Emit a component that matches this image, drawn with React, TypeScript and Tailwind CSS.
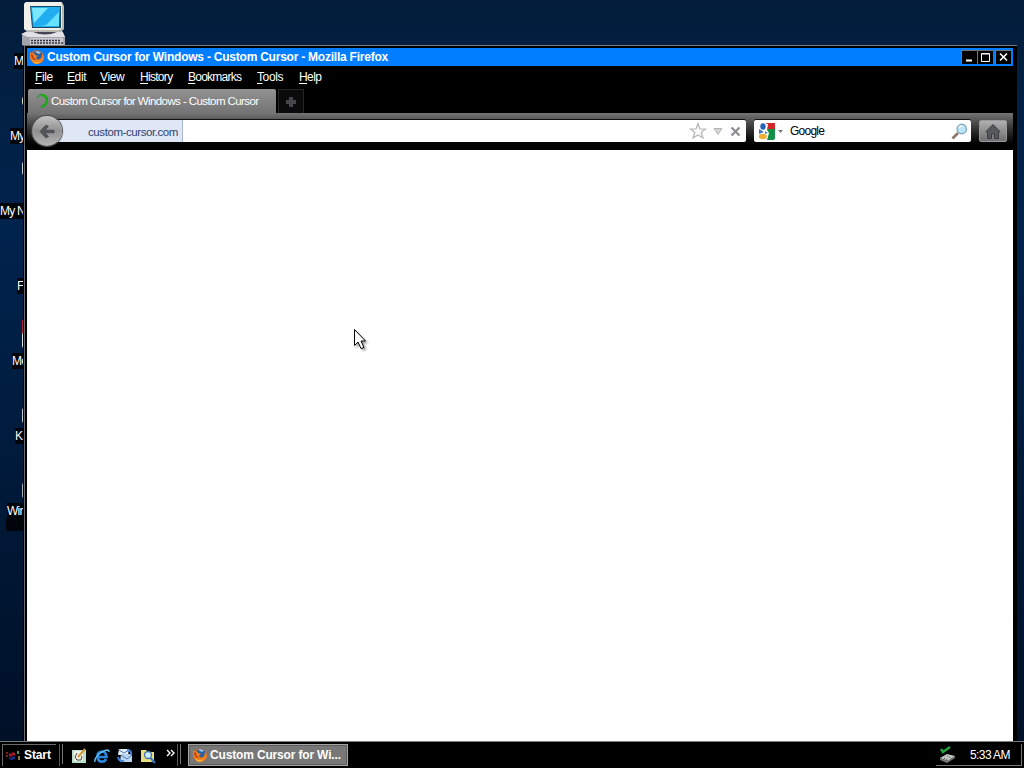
import React from "react";

const desktopItems = [
  { label: "M", pad: "pl-[14px]", sliver: "hidden" },
  { label: "My", pad: "pl-[10px]", sliver: "h-[8px] mb-[23px] bg-[#d8d8b0]" },
  { label: "My N", pad: "pl-0", sliver: "h-[13px] mb-[28px] bg-[#c5ced4]" },
  { label: "F", pad: "pl-[17px]", sliver: "hidden" },
  { label: "Me", pad: "pl-[12px]", sliver: "h-[29px] mb-[5px] bg-linear-to-b from-[#b51c30] from-45% to-[#d9dde0] to-55%" },
  { label: "K", pad: "pl-[15px]", sliver: "h-[15px] mb-[5px] bg-[#c5ced4]" },
  { label: "Wir", pad: "pl-[7px]", sliver: "h-[15px] mb-[5px] bg-[#a9b1b9]" },
];

const menus = [
  { name: "File", style: "w-[32px] tracking-[-0.4px]" },
  { name: "Edit", style: "w-[33px] tracking-[-0.4px]" },
  { name: "View", style: "w-[40px] tracking-[-0.4px]" },
  { name: "History", style: "w-[48px] tracking-[-0.7px]" },
  { name: "Bookmarks", style: "w-[69px] tracking-[-0.75px]" },
  { name: "Tools", style: "w-[42px] tracking-[-0.4px]" },
  { name: "Help", style: "w-[30px] tracking-[-0.6px]" },
];

const FirefoxIcon = () => (
  <svg width="16" height="16" viewBox="0 0 16 16" className="shrink-0">
    <circle cx="8" cy="8" r="7" fill="#df6a16" />
    <circle cx="8.5" cy="6.5" r="5" fill="#2e5f9e" />
    <path d="M6 2.5Q9 1 12 3.5L10 5L8 4Z" fill="#9cc6e8" />
    <path d="M1 3L3 5L5 4L6 6L9 7L7 8.5Q7 11 10 10.5Q13 9.5 13 5Q16 8 14 12Q11 16 6 14.5Q0 12 1 3Z" fill="#f0811e" />
    <path d="M3 11Q7 15 12 12Q9 16 5 14Z" fill="#f9b63c" />
    <path d="M2 5Q2 9 5 11L7 11Q4 9 4 6Z" fill="#b93d16" />
  </svg>
);

const ComputerIcon = () => (
  <svg width="46" height="44" viewBox="0 0 46 44">
    <path d="M4 31L42 31L44 36V44H1V34Z" fill="#a5a5b0" />
    <path d="M0 33L7 30H41L44 36H7Z" fill="#e1e1e6" />
    <path d="M3 3L5 1H41L43 5V28L40 31H6L3 28Z" fill="#b9b9b4" />
    <path d="M3 3L5 1H40L41 4V27L38 29H6L3 28Z" fill="#f0f0ea" />
    <path d="M9 5H40V27H11Z" fill="#194a62" />
    <path d="M10 6H39L38 26H12Z" fill="#20aef0" />
    <path d="M11 7H27L13 22Z" fill="#7be8ff" />
    <path d="M25 24L38 11V25H20Z" fill="#65e2ff" />
    <path d="M12 31Q24 36 36 31Z" fill="#454555" />
    <path d="M9 37H42V44H9Z" fill="#c8c8ce" />
    <path d="M10 39.5H40M10 42H42" stroke="#333340" strokeWidth="1.5" strokeDasharray="2 1" />
  </svg>
);

const WindowButtons = () => (
  <div className="ml-auto flex h-[17px] pr-[2px] pt-px">
    <button className="flex h-[14px] w-[16px] items-center justify-center border-t border-l border-[#70747a] bg-black">
      <svg width="12" height="12"><path d="M2 9.5H8" stroke="white" strokeWidth="2" /></svg>
    </button>
    <button className="flex h-[14px] w-[16px] items-center justify-center border-t border-l border-[#70747a] bg-black">
      <svg width="12" height="12"><path d="M1.5 2.5H9.5V10.5H1.5ZM1.5 3H9.5" stroke="white" fill="none" /></svg>
    </button>
    <button className="ml-[2px] flex h-[14px] w-[16px] items-center justify-center border-t border-l border-[#70747a] bg-black">
      <svg width="12" height="12"><path d="M2 2.5L9 9.5M9 2.5L2 9.5" stroke="white" strokeWidth="1.6" /></svg>
    </button>
  </div>
);

const AddressBar = () => (
  <div className="flex h-[22px] w-[698px] items-center rounded-r-[2px] bg-white shadow-[0_-1px_0_#111]">
    <div className="h-full w-[135px] whitespace-nowrap border-r border-[#a9b6cf] bg-[#dfe6f5] pl-[40px] text-[11.5px] leading-[24px] tracking-[-0.42px] text-[#2f4370]">
      custom-cursor.com
    </div>
    <svg width="18" height="18" viewBox="0 0 18 18" className="ml-auto">
      <path d="M9 1.5L11 7H16.5L12.2 10.5L14 16L9 13L4 16L5.8 10.5L1.5 7H7Z" fill="#fafafa" stroke="#b5b5b5" strokeWidth="1.2" />
    </svg>
    <svg width="10" height="9" viewBox="0 0 10 9" className="ml-[6px]">
      <path d="M1 1.5H9L5 7.5Z" fill="#d6d6d6" stroke="#b5b5b5" />
    </svg>
    <svg width="11" height="11" viewBox="0 0 11 11" className="ml-[7px] mr-[5px]">
      <path d="M1.5 1.5L9.5 9.5M9.5 1.5L1.5 9.5" stroke="#8e8e94" strokeWidth="2.3" />
    </svg>
  </div>
);

const SearchBar = () => (
  <div className="ml-[8px] flex h-[22px] w-[217px] items-center rounded-[2px] bg-white shadow-[0_-1px_0_#111]">
    <svg width="17" height="17" viewBox="0 0 17 17" className="ml-[4px]">
      <path d="M8 0H17V7H8Z" fill="#d4272c" />
      <path d="M8 6H17V15Q17 17 15 17H8Z" fill="#139047" />
      <path d="M1 6L6 9L1 11Z" fill="#3979cc" />
      <path d="M5 0L10 1L9 7L11 10L9 17H4L6 10L4 7Z" fill="white" />
      <ellipse cx="5" cy="3.5" rx="2.7" ry="3.3" fill="#2763b9" />
      <ellipse cx="4.8" cy="13.5" rx="4" ry="2.7" fill="#eeb233" />
      <path d="M7 8L10 10L7 11Z" fill="#4783ca" />
    </svg>
    <svg width="5" height="3" viewBox="0 0 5 3" className="ml-[3px]"><path d="M0 0H5L2.5 3Z" fill="#777" /></svg>
    <span className="ml-[7px] leading-[24px] tracking-[-0.75px] text-black">Google</span>
    <svg width="17" height="17" viewBox="0 0 17 17" className="ml-auto mr-[3px]">
      <path d="M1.5 15.5L7 10" stroke="#8d7468" strokeWidth="2.6" />
      <circle cx="10.8" cy="6" r="4.7" fill="#bce5f8" stroke="#83a8bf" strokeWidth="1.4" />
      <path d="M8 5Q9 3 11 3" stroke="white" fill="none" strokeWidth="1.5" />
    </svg>
  </div>
);

const BrowserWindow = () => (
  <div className="absolute left-[23px] top-[45px] flex h-[696px] w-[994px] flex-col border-t border-[#777b80] bg-black pl-[4px] pr-[4px] pt-[2px] shadow-[inset_1px_0_0_#000,inset_2px_0_0_#686c70]">
    <div className="flex h-[18px] shrink-0 items-center bg-[#007eff] pl-[2px]">
      <FirefoxIcon />
      <span className="ml-[2px] whitespace-nowrap font-bold leading-[18px] tracking-[-0.23px] text-white">
        Custom Cursor for Windows - Custom Cursor - Mozilla Firefox
      </span>
      <WindowButtons />
    </div>
    <div className="flex h-[23px] shrink-0 pl-[8px] leading-[22px]">
      {menus.map((menu) => (
        <span key={menu.name} className={menu.style}>
          <span className="underline underline-offset-2">{menu.name[0]}</span>
          {menu.name.slice(1)}
        </span>
      ))}
    </div>
    <div className="flex h-[24px] shrink-0 pl-px">
      <div className="flex w-[248px] items-center rounded-t-[2px] bg-linear-to-b from-[#929292] to-[#747474] pl-[6px]">
        <svg width="16" height="16" viewBox="0 0 16 16" className="shrink-0">
          <path d="M7 2Q13 2 13 8Q12 13 7 14" fill="none" stroke="#18a818" strokeWidth="2.5" />
          <path d="M3 5L7 1" stroke="#4c944c" strokeWidth="2" />
        </svg>
        <span className="ml-[1px] whitespace-nowrap text-[11.5px] leading-[28px] tracking-[-0.58px]">
          Custom Cursor for Windows - Custom Cursor
        </span>
      </div>
      <div className="ml-[2px] flex w-[26px] items-center justify-center border border-b-0 border-[#262626] bg-[#0b0b0b]">
        <svg width="12" height="12"><path d="M4 1H8V4H11V8H8V11H4V8H1V4H4Z" fill="#47474b" /></svg>
      </div>
    </div>
    <div className="flex h-[37px] shrink-0 items-center bg-linear-to-b from-[#757575] via-[#303030] via-45% to-black pb-[1px] pl-[5px]">
      <button className="z-10 -mr-[14px] flex size-[30px] shrink-0 items-center justify-center rounded-full bg-linear-to-b from-[#c3c3c3] via-[#909090] to-[#b5b5b5] shadow-[0_0_1px_1px_#4b4b4b]">
        <svg width="16" height="15" viewBox="0 0 16 15">
          <path d="M1 7.5L7 1L9.5 2.5L6 6.2H15V8.8H6L9.5 12.5L7 14Z" fill="#55565b" stroke="#3b3c40" strokeWidth=".6" />
        </svg>
      </button>
      <AddressBar />
      <SearchBar />
      <button className="ml-[8px] flex h-[22px] w-[28px] items-center justify-center rounded-[2px] border border-[#999] bg-linear-to-b from-[#b0b0b0] to-[#707070]">
        <svg width="16" height="15" viewBox="0 0 16 15">
          <path d="M8 .5L15 7.5L13.5 8.5V14.5H9.5V10H6.5V14.5H2.5V8.5L1 7.5Z" fill="#56585d" stroke="#3a3c40" />
        </svg>
      </button>
    </div>
    <div className="grow bg-white" />
  </div>
);

const QuickLaunch = () => (
  <div className="flex items-center gap-[7px] pb-px">
    <svg width="16" height="16" viewBox="0 0 16 16">
      <path d="M1 2H15V15H1Z" fill="#b8e0ce" />
      <path d="M3 3H12V13H3Z" fill="#f2f2e8" />
      <path d="M6 5L4 9L6 12H10L11 8" stroke="#444" fill="none" />
      <path d="M7 9L14 1" stroke="#d19835" strokeWidth="2" />
    </svg>
    <svg width="16" height="16" viewBox="0 0 16 16">
      <path d="M3.5 9H12.5Q12 3.5 8 3.5Q3 4 3.5 9Q4 14 8.5 13.5Q11 13.5 12 11" fill="none" stroke="#2987df" strokeWidth="2.7" />
      <path d="M1 14Q0 9 8 4Q15 0 15 4" fill="none" stroke="#69c4f4" strokeWidth="1.4" />
    </svg>
    <svg width="16" height="16" viewBox="0 0 16 16">
      <path d="M2 1H12L11 7H1Z" fill="#e2edfa" /><path d="M4 6H15V14H3Z" fill="#b9d5f2" />
      <path d="M2 2L7 5L12 2M4 7L10 11L15 7" stroke="#4979b6" fill="none" />
      <path d="M1 9Q2 14 7 13M10 2Q15 2 14 7" stroke="#3e83dd" strokeWidth="2" fill="none" />
    </svg>
    <svg width="16" height="16" viewBox="0 0 16 16">
      <path d="M1 2H6L8 4H14V14H1Z" fill="#eadf7d" />
      <circle cx="8" cy="7" r="3.5" fill="#c5eefa" stroke="#456fae" strokeWidth="1.3" />
      <path d="M10.5 10L15 15" stroke="#3274c8" strokeWidth="2" />
    </svg>
    <svg width="9" height="9" viewBox="0 0 9 9" className="mb-[5px] ml-[3px]">
      <path d="M1 1L4 4L1 7M5 1L8 4L5 7" stroke="white" strokeWidth="1.4" fill="none" />
    </svg>
  </div>
);

const Taskbar = () => (
  <div className="absolute bottom-0 left-0 flex h-[27px] w-full border-t border-[#777b7e] bg-black pt-[2px]">
    <button className="ml-[2px] flex h-[22px] w-[54px] items-center border-l border-t border-[#696969] pl-[3px]">
      <svg width="15" height="13" viewBox="0 0 15 13" className="shrink-0">
        <path d="M0 4H2M0 7H2" stroke="#811e22" strokeWidth="2" />
        <path d="M3 4L5 5L7 3L9 4V7L7 6L5 8L3 7Z" fill="#a81826" /><path d="M3 8L5 9L7 7L9 8V10L6 11L3 10Z" fill="#182f91" />
        <path d="M12 2V5" stroke="#4e9c49" strokeWidth="2" /><path d="M13 7V11" stroke="#aaa343" strokeWidth="1.5" />
      </svg>
      <span className="ml-[3px] font-bold leading-[23px] tracking-[-0.1px]">Start</span>
    </button>
    <div className="ml-[3px] h-[22px] w-px bg-[#555]" />
    <div className="ml-[2px] mr-[8px] h-[20px] w-px bg-[#777]" />
    <QuickLaunch />
    <div className="ml-[2px] h-[22px] w-px bg-[#555]" />
    <div className="ml-[2px] h-[20px] w-px bg-[#777]" />
    <button className="ml-[7px] flex h-[22px] w-[160px] items-center border border-[#a5a5a5] bg-[#777] pl-[3px] outline-1 -outline-offset-2 outline-[#5d5d5d]">
      <FirefoxIcon />
      <span className="ml-[2px] whitespace-nowrap font-bold leading-[24px] tracking-[-0.16px]">Custom Cursor for Wi...</span>
    </button>
    <div className="ml-auto mr-[2px] flex h-[22px] w-[86px] items-center border-b border-r border-[#777]">
      <svg width="18" height="17" viewBox="0 0 18 17" className="ml-[3px]">
        <path d="M1 12L8 8L16 10L9 15Z" fill="#c4c7c4" />
        <path d="M1 12V14L8 17L16 12V10L9 15Z" fill="#757a75" />
        <path d="M5 12L9 14M8 10L12 12" stroke="#555" strokeDasharray="1 1" />
        <path d="M2 3L4 6L11 1" stroke="#25a33c" strokeWidth="2.5" fill="none" />
      </svg>
      <span className="ml-[13px] whitespace-nowrap leading-[24px] tracking-[-0.6px]">5:33 AM</span>
    </div>
  </div>
);

export default function App() {
  return (
    <div className="relative h-[768px] w-[1024px] cursor-default overflow-hidden bg-linear-to-b from-[#031d3b] via-[#00234d] via-30% to-[#000f25] font-['Liberation_Sans',sans-serif] text-[12px] text-white">
      <div className="flex w-[24px] flex-col">
        {desktopItems.map((item, i) => (
          <div key={item.pad} className={i === 0 ? "flex h-[69px] flex-col justify-end" : "flex h-[75px] flex-col justify-end"}>
            <div className={`w-[2px] shrink-0 self-end rounded-l-full ${item.sliver}`} />
            <div className={`flex h-[16px] shrink-0 whitespace-nowrap leading-[16px] tracking-[-0.8px] ${item.pad}`}>
              <span className="grow bg-[#00040b]">{item.label}</span>
            </div>
          </div>
        ))}
        <div className="ml-[6px] h-[12px] bg-[#00040b]" />
      </div>
      <div className="absolute left-[21px] top-[1px]">
        <ComputerIcon />
      </div>
      <BrowserWindow />
      <Taskbar />
      <svg width="18" height="24" viewBox="0 0 18 24" className="absolute left-[353px] top-[328px] drop-shadow-[2px_2px_1px_rgba(0,0,0,0.35)]">
        <path d="M1.5 1.5V17.5L5 14L8 20.5L11 19.5L8 13H12.5Z" fill="white" stroke="black" />
      </svg>
    </div>
  );
}
